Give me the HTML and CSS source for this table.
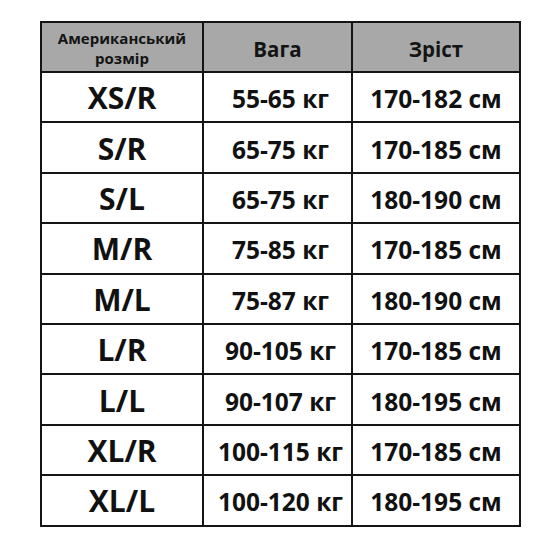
FILE: index.html
```html
<!DOCTYPE html>
<html lang="uk">
<head>
<meta charset="utf-8">
<link rel="stylesheet" href="styles.css">
</head>
<body>
<table class="sizes">
  <colgroup>
    <col class="c1"><col class="c2"><col class="c3">
  </colgroup>
  <thead>
    <tr>
      <th class="h-small">Американський<br>розмір</th>
      <th>Вага</th>
      <th>Зріст</th>
    </tr>
  </thead>
  <tbody>
    <tr><td class="size">XS/R</td><td class="w">55-65 кг</td><td>170-182 см</td></tr>
    <tr><td class="size">S/R</td><td class="w">65-75 кг</td><td>170-185 см</td></tr>
    <tr><td class="size">S/L</td><td class="w">65-75 кг</td><td>180-190 см</td></tr>
    <tr><td class="size">M/R</td><td class="w">75-85 кг</td><td>170-185 см</td></tr>
    <tr><td class="size">M/L</td><td class="w">75-87 кг</td><td>180-190 см</td></tr>
    <tr><td class="size">L/R</td><td class="w">90-105 кг</td><td>170-185 см</td></tr>
    <tr><td class="size">L/L</td><td class="w">90-107 кг</td><td>180-195 см</td></tr>
    <tr><td class="size">XL/R</td><td class="w">100-115 кг</td><td>170-185 см</td></tr>
    <tr><td class="size">XL/L</td><td class="w">100-120 кг</td><td>180-195 см</td></tr>
  </tbody>
</table>
</body>
</html>
```

FILE: styles.css
```css
html, body {
  margin: 0;
  padding: 0;
  background: #ffffff;
}
body {
  padding: 21px 0 0 40px;
  font-family: "Open Sans", "Noto Sans", sans-serif;
  color: #111;
}
.sizes {
  border-collapse: collapse;
  table-layout: fixed;
  width: 479px;
}
.c1 { width: 162px; }
.c2 { width: 149px; }
.c3 { width: 168px; }
.sizes thead tr { height: 50px; }
.sizes tbody tr { height: 50.4px; }
.sizes th, .sizes td {
  border: 2px solid #141414;
  text-align: center;
  vertical-align: middle;
  padding: 0;
  font-weight: 700;
}
.sizes th {
  background: #a8a8a8;
  padding-top: 3px;
  font-size: 20.5px;
  color: #141414;
}
.sizes th.h-small {
  font-size: 15px;
  line-height: 20px;
  padding-top: 2px;
}
.sizes td {
  padding-top: 3px;
  font-size: 24.5px;
}
.sizes td.w {
  padding-left: 6px;
}
.sizes td.size {
  font-size: 30px;
  padding-top: 1px;
}
```
